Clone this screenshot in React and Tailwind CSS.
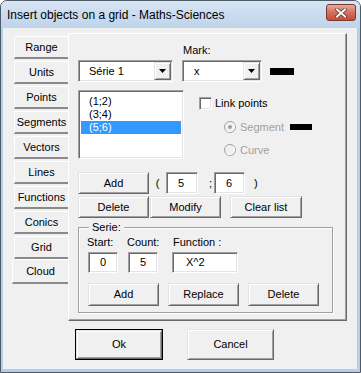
import React from "react";

const raised =
  "bg-[#f0f0f0] border border-t-[#e3e3e3] border-l-[#e3e3e3] border-r-[#696969] border-b-[#696969] shadow-[inset_1px_1px_0_#ffffff,inset_-1px_-1px_0_#a0a0a0]";
const sunken =
  "bg-white border border-t-[#a0a0a0] border-l-[#a0a0a0] border-r-white border-b-white shadow-[inset_1px_1px_0_#696969,inset_-1px_-1px_0_#e3e3e3]";

function Btn({ children, className = "" }) {
  return (
    <button
      type="button"
      className={`${raised} flex items-center justify-center text-[11px] text-black ${className}`}
    >
      {children}
    </button>
  );
}

function Field({ value, className = "", pad = "pl-[11px]" }) {
  return (
    <div className={`${sunken} flex items-center ${pad} ${className}`}>
      {value}
    </div>
  );
}

function Combo({ value, className = "", pad = "pl-[9px]" }) {
  return (
    <div className={`${sunken} flex items-center p-[1px] h-[22px] ${className}`}>
      <span className={pad}>{value}</span>
      <div className={`${raised} ml-auto w-[17px] h-full flex items-center justify-center`}>
        <svg width="7" height="4" viewBox="0 0 7 4">
          <polygon points="0,0 7,0 3.5,4" fill="#000" />
        </svg>
      </div>
    </div>
  );
}

function Radio({ checked }) {
  return (
    <svg width="12" height="12" viewBox="0 0 12 12">
      <circle cx="6" cy="6" r="5.5" fill="#f0f0f0" stroke="#a0a0a0" />
      <path d="M2.5 9.5 A5 5 0 0 0 9.5 2.5" fill="none" stroke="#ffffff" />
      {checked && <circle cx="6" cy="6" r="2" fill="#a0a0a0" />}
    </svg>
  );
}

const TABS = ["Range", "Units", "Points", "Segments", "Vectors", "Lines", "Functions", "Conics", "Grid"];

export default function App() {
  return (
    <div className="w-[361px] h-[373px] flex flex-col bg-[#b2d0ec] border border-[#4e5a68] rounded-t-[7px] overflow-hidden font-['Liberation_Sans',Arial,sans-serif] text-[11px] text-black">
      <div className="h-[27px] shrink-0 flex items-center pl-[6px] pr-[4px] bg-gradient-to-b from-[#d7e5f4] to-[#bfd3ea]">
        <span className="text-[12px] text-black">Insert objects on a grid - Maths-Sciences</span>
        <div className="ml-auto self-start mt-[3px] w-[30px] h-[17px] rounded-[3px] border border-[#7b3a30] bg-gradient-to-b from-[#e8ab9c] via-[#d2715f] to-[#c44b38] flex items-center justify-center">
          <svg width="12" height="10" viewBox="0 0 12 10">
            <path d="M2 1.5 L10 8.5 M10 1.5 L2 8.5" stroke="#5a2a22" strokeWidth="3.4" strokeLinecap="square" />
            <path d="M2 1.5 L10 8.5 M10 1.5 L2 8.5" stroke="#ffffff" strokeWidth="2" strokeLinecap="square" />
          </svg>
        </div>
      </div>

      <div className="flex-1 ml-[2px] mr-[3px] mb-[3px] bg-[#f0f0f0] flex flex-col">
        <div className="mt-[5px] ml-[9px] flex">
          <div className="w-[56px] flex flex-col pt-[3px]">
            {TABS.map((t) => (
              <div
                key={t}
                className="ml-[2px] w-[54px] h-[23px] mb-[2px] border-t border-l border-t-white border-l-white border-b-2 border-b-[#8a8a8a] flex items-center justify-center"
              >
                {t}
              </div>
            ))}
            <div className="-mt-[2px] w-[56px] h-[25px] border-t border-l border-t-white border-l-white border-b-2 border-b-[#8a8a8a] flex items-center justify-center">
              Cloud
            </div>
          </div>

          <div className="w-[279px] h-[288px] border border-t-white border-l-white border-r-[#696969] border-b-[#696969] shadow-[inset_-1px_-1px_0_#a0a0a0] flex flex-col">
            <div className="mt-[9px] pl-[114px] h-[14px] leading-[14px]">Mark:</div>

            <div className="mt-[3px] pl-[9px] flex items-center h-[22px]">
              <Combo value="Série 1" className="w-[95px]" />
              <Combo value="x" className="ml-[9px] w-[80px]" pad="pl-[10px]" />
              <div className="ml-[8px] w-[24px] h-[7px] bg-black" />
            </div>

            <div className="mt-[8px] pl-[9px] flex h-[69px]">
              <div className={`${sunken} w-[106px] h-[69px] p-[2px] pt-[4px] flex flex-col`}>
                <div className="h-[13px] leading-[13px] pl-[8px]">(1;2)</div>
                <div className="h-[13px] leading-[13px] pl-[8px]">(3;4)</div>
                <div className="h-[13px] leading-[13px] pl-[8px] bg-[#3399ff] text-white">(5;6)</div>
              </div>
              <div className="ml-[15px] flex flex-col">
                <div className="mt-[6px] h-[14px] flex items-center">
                  <div className={`${sunken} w-[13px] h-[13px]`} />
                  <span className="ml-[3px]">Link points</span>
                </div>
                <div className="mt-[10px] h-[14px] flex items-center pl-[25px] text-[#a0a0a0]">
                  <Radio checked />
                  <span className="ml-[4px]">Segment</span>
                  <div className="ml-[6px] w-[22px] h-[6px] bg-black" />
                </div>
                <div className="mt-[9px] h-[14px] flex items-center pl-[25px] text-[#a0a0a0]">
                  <Radio />
                  <span className="ml-[4px]">Curve</span>
                </div>
              </div>
            </div>

            <div className="mt-[13px] pl-[9px] flex items-center h-[22px]">
              <Btn className="w-[71px] h-[22px]">Add</Btn>
              <span className="w-[17px] text-center">(</span>
              <Field value="5" className="w-[32px] h-[22px]" />
              <span className="w-[16px] pl-[11px]">;</span>
              <Field value="6" className="w-[31px] h-[22px]" />
              <span className="ml-[9px]">)</span>
            </div>

            <div className="mt-[2px] pl-[9px] flex h-[22px]">
              <Btn className="w-[71px] h-[22px]">Delete</Btn>
              <Btn className="ml-[1px] w-[71px] h-[22px]">Modify</Btn>
              <Btn className="ml-[9px] w-[72px] h-[22px]">Clear list</Btn>
            </div>

            <div className="mt-[9px] ml-[9px] w-[255px] h-[86px] border border-[#a0a0a0] shadow-[1px_1px_0_#ffffff,inset_1px_1px_0_#ffffff] flex flex-col">
              <div className="-mt-[8px] ml-[10px] px-[3px] w-fit h-[14px] leading-[14px] bg-[#f0f0f0]">Serie:</div>
              <div className="mt-[1px] pl-[8px] flex h-[14px] leading-[14px]">
                <span className="w-[40px]">Start:</span>
                <span className="w-[46px]">Count:</span>
                <span>Function :</span>
              </div>
              <div className="mt-[3px] flex h-[21px]">
                <Field value="0" className="ml-[9px] w-[30px] h-[21px]" />
                <Field value="5" className="ml-[10px] w-[30px] h-[21px]" />
                <Field value="X^2" className="ml-[14px] w-[66px] h-[21px]" pad="pl-[13px]" />
              </div>
              <div className="mt-[10px] flex h-[23px]">
                <Btn className="ml-[9px] w-[71px] h-[23px]">Add</Btn>
                <Btn className="ml-[9px] w-[71px] h-[23px]">Replace</Btn>
                <Btn className="ml-[9px] w-[71px] h-[23px]">Delete</Btn>
              </div>
            </div>
          </div>
        </div>

        <div className="mt-[8px] ml-[72px] flex">
          <div className="w-[88px] h-[31px] border border-black flex">
            <Btn className="flex-1">Ok</Btn>
          </div>
          <Btn className="ml-[24px] w-[87px] h-[31px]">Cancel</Btn>
        </div>
      </div>
    </div>
  );
}
